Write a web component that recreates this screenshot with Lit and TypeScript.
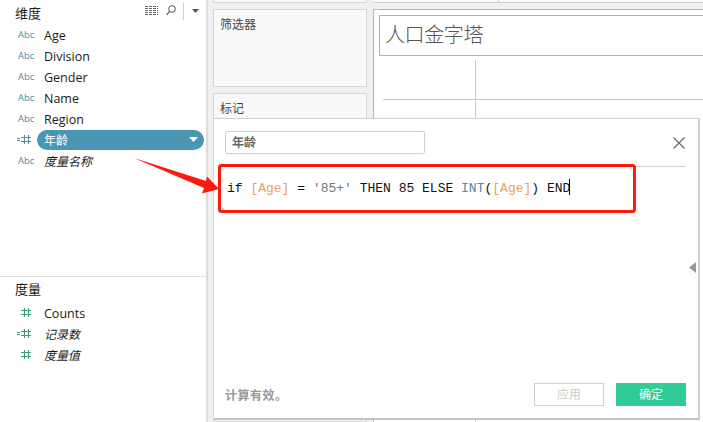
import { LitElement, html, css, svg } from "lit";
import { customElement } from "lit/decorators.js";

const hash = (tone: string, calc: boolean) => html`<svg class="hash ${tone}" width="17" height="11" viewBox="0 0 17 11">
  ${calc ? svg`<path d="M0 4.5h3M0 6.5h3" stroke="currentColor" stroke-width="1" fill="none"/>` : ""}
  <path d="M7.500 1v9M11.500 1v9M4 3.500h10M4 7.500h10" stroke="currentColor" stroke-width="1.1" fill="none"/>
</svg>`;

@customElement("app-root")
export class AppRoot extends LitElement {
  static styles = css`
    :host { display: flex; position: relative; width: 703px; height: 422px; overflow: hidden; background: #f0f0f0;
      font-family: "Open Sans", "Noto Sans CJK SC", sans-serif; color: #1a1a1a; }
    .side { width: 206px; flex: none; background: #fff; border-right: 2px solid #dcdcdc; display: flex; flex-direction: column; }
    .sec-top { height: 277px; box-sizing: border-box; border-bottom: 1px solid #e2e2e2; }
    .head { height: 24px; display: flex; align-items: center; padding-left: 15px; font-size: 13px; }
    .tools { margin-left: auto; display: flex; align-items: center; height: 20px; padding-right: 7px; padding-bottom: 3px; }
    .tools svg { display: block; }
    .glass { margin-left: 8px; }
    .sep { width: 1px; height: 18px; background: #d0d0d0; margin: 0 8px 0 7px; }
    .rows { display: flex; flex-direction: column; }
    .row { height: 21px; display: flex; align-items: center; font-size: 12.5px; }
    .ic { width: 37px; flex: none; box-sizing: border-box; padding-left: 18px; display: flex; align-items: center; }
    .abc { font-size: 9.5px; color: #4a8ca8; line-height: 1; }
    .hash { display: block; margin-left: -1px; }
    .green { color: #3f9c80; }
    .blue { color: #4a8ca8; }
    .name { padding-left: 7px; padding-top: 2px; }
    .cjk { font-size: 12px; font-style: italic; padding-top: 0; }
    .pill { flex: none; width: 167px; height: 20px; border-radius: 10px; background: #4b96b2; color: #fff; display: flex; align-items: center; padding-left: 7px; box-sizing: border-box; font-size: 12px; }
    .pill svg { margin-left: auto; margin-right: 6px; }
    .head2 { height: 25px; padding-bottom: 2px; box-sizing: border-box; }
    .main { flex: 1; display: flex; gap: 6px; padding-left: 5px; min-width: 0; }
    .shelves { width: 154px; flex: none; display: flex; flex-direction: column; }
    .shelf { background: #f9f9f9; border: 1px solid #d6d6d6; box-sizing: border-box; font-size: 12px; color: #444; padding: 5px 6px; }
    .s0 { height: 3px; border-top: 0; padding: 0; margin-bottom: 6px; }
    .s1 { height: 78px; margin-bottom: 6px; }
    .s2 { flex: 1; }
    .stage { flex: 1; min-width: 0; display: flex; flex-direction: column; margin-right: -5px; }
    .topbar { height: 3px; flex: none; margin-bottom: 6px; border-bottom: 1px solid #d0d0d0; background: #f9f9f9; box-sizing: border-box; display: flex; }
    .topbar i { display: block; width: 125px; border-right: 1px solid #d0d0d0; }
    .canvas { flex: 1; background: #fff; border-top: 1px solid #b4b4b4; border-left: 1px solid #b4b4b4; padding: 5px 0 0 5px; display: flex; flex-direction: column; }
    .title { height: 41px; box-sizing: border-box; border: 1px solid #b4b4b4; border-right: 0; font-size: 20px; color: #555; padding-left: 5px; line-height: 37px; font-weight: 300; letter-spacing: -0.4px; }
    .chart { flex: 1; display: grid; grid-template-columns: 93px 1fr; grid-template-rows: 40px 1fr; margin: 4px 0 0 4px; }
    .c1 { border-right: 1px solid #c8c8c8; border-bottom: 1px solid #c8c8c8; }
    .c2 { border-bottom: 1px solid #c8c8c8; }
    .c3 { border-right: 1px solid #c8c8c8; }

    .dialog { position: absolute; left: 213px; top: 118px; width: 487px; height: 302px; box-sizing: border-box; background: #fff;
      border-top: 1px solid #cfcfcf; border-left: 1px solid #d8d8d8; border-right: 2px solid #cfcfcf; border-bottom: 2px solid #c4c4c4;
      padding: 12px 12px 12px 11px; display: flex; flex-direction: column; }
    .dhead { display: flex; align-items: center; flex: none; border-bottom: 1px solid #d4d4d4; padding-bottom: 12px; box-sizing: border-box; height: 36px; }
    .input { width: 200px; height: 23px; box-sizing: border-box; border: 1px solid #cfcfcf; border-radius: 2px; font-size: 12px; font-weight: 700; color: #666; padding-left: 6px; line-height: 21px; }
    .close { margin-left: auto; display: block; }
    .code { font-family: "Liberation Mono", monospace; font-size: 13px; line-height: 15px; padding: 12px 0 0 2px; color: #111; white-space: pre; flex: 1; }
    .f { color: #f0a050; }
    .s { color: #777; }
    .k { color: #4a8ca8; }
    .caret { display: inline-block; width: 1px; height: 16px; background: #000; vertical-align: -3px; margin-left: -1px; }
    .foot { display: flex; align-items: center; flex: none; height: 23px; }
    .status { font-size: 12px; font-weight: 700; color: #999; letter-spacing: 0.5px; }
    .btn { width: 70px; height: 23px; box-sizing: border-box; font-size: 12px; text-align: center; line-height: 21px; }
    .apply { margin-left: auto; border: 1px solid #d0d0d0; color: #ccc; }
    .ok { margin-left: 12px; background: #2fcc96; color: #fff; line-height: 23px; }
    .collapse { position: absolute; left: 475px; top: 143px; display: block; }
    .overlay { position: absolute; left: 0; top: 0; pointer-events: none; }
  `;

  field(name: string, italic = false) {
    return html`<div class="row"><span class="ic"><span class="abc">Abc</span></span><span class="name ${italic ? "cjk" : ""}">${name}</span></div>`;
  }
  measure(name: string, italic: boolean, calc: boolean) {
    return html`<div class="row"><span class="ic">${hash("green", calc)}</span><span class="name ${italic ? "cjk" : ""}">${name}</span></div>`;
  }

  render() {
    return html`
      <div class="side">
        <div class="sec-top">
          <div class="head">维度
            <div class="tools">
              <svg width="13" height="9" viewBox="0 0 13 9"><path d="M0 .5h13M0 2.500h13M0 4.500h13M0 6.500h13M0 8.500h13" stroke="#666" stroke-width="1" stroke-dasharray="3 1" fill="none" /></svg>
              <svg class="glass" width="10" height="11" viewBox="0 0 10 11"><circle cx="6" cy="4" r="3.2" fill="none" stroke="#666" stroke-width="1.1"/><path d="M3.600 6.400L.8 9.800" stroke="#666" stroke-width="1.4"/></svg>
              <span class="sep"></span>
              <svg width="7" height="4" viewBox="0 0 7 4"><path d="M0 0h7L3.500 4z" fill="#555"/></svg>
            </div>
          </div>
          <div class="rows">
            ${this.field("Age")}${this.field("Division")}${this.field("Gender")}${this.field("Name")}${this.field("Region")}
            <div class="row"><span class="ic">${hash("blue", true)}</span>
              <span class="pill">年龄<svg width="9" height="5" viewBox="0 0 9 5"><path d="M0 0h9L4.500 5z" fill="#fff"/></svg></span></div>
            ${this.field("度量名称", true)}
          </div>
        </div>
        <div class="head head2">度量</div>
        <div class="rows">
          ${this.measure("Counts", false, false)}
          ${this.measure("记录数", true, true)}
          ${this.measure("度量值", true, false)}
        </div>
      </div>
      <div class="main">
        <div class="shelves">
          <div class="shelf s0"></div>
          <div class="shelf s1">筛选器</div>
          <div class="shelf s2">标记</div>
        </div>
        <div class="stage">
          <div class="topbar"><i></i></div>
          <div class="canvas">
            <div class="title">人口金字塔</div>
            <div class="chart"><div class="c1"></div><div class="c2"></div><div class="c3"></div><div></div></div>
          </div>
        </div>
      </div>
      <div class="dialog">
        <div class="dhead">
          <div class="input">年龄</div>
          <svg class="close" width="14" height="14" viewBox="0 0 14 14"><path d="M1.500 1.500l11 11M12.500 1.500l-11 11" stroke="#666" stroke-width="1.2" fill="none"/></svg>
        </div>
        <div class="code">if <span class="f">[Age]</span> = <span class="s">'85+'</span> THEN 85 ELSE <span class="k">INT</span>(<span class="f">[Age]</span>) END<span class="caret"></span></div>
        <div class="foot">
          <span class="status">计算有效。</span>
          <span class="btn apply">应用</span>
          <span class="btn ok">确定</span>
        </div>
        <svg class="collapse" width="8" height="11" viewBox="0 0 8 11"><path d="M7 0v11L0 5.500z" fill="#999"/></svg>
      </div>
      <svg class="overlay" width="703" height="422" viewBox="0 0 703 422">
        <rect x="219.500" y="165.500" width="415" height="46" rx="2" fill="none" stroke="#fb1b0e" stroke-width="3"/>
        <path d="M134 158L206 181L207 176.500L219 189L202 193.500L204 188Z" fill="#fb1b0e"/>
      </svg>
    `;
  }
}
